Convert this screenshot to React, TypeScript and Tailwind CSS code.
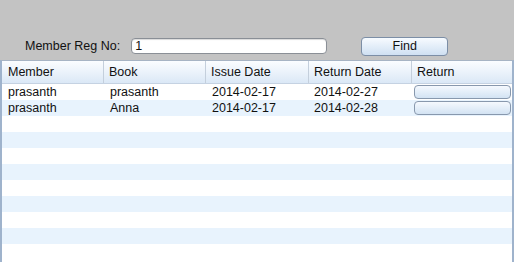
import React from "react";

const ROWS = [
  { member: "prasanth", book: "prasanth", issue: "2014-02-17", ret: "2014-02-27" },
  { member: "prasanth", book: "Anna", issue: "2014-02-17", ret: "2014-02-28" },
];

const HEADERS = ["Member", "Book", "Issue Date", "Return Date", "Return"];
const COLS = "grid grid-cols-[102px_102px_103px_103px_1fr]";

export default function App() {
  const empty = Array.from({ length: 9 });
  return (
    <div className="flex h-[262px] w-[514px] flex-col overflow-hidden bg-[#c3c3c3] font-['Liberation_Sans',Arial,sans-serif] text-[12.5px] text-[#111]">
      {/* search bar */}
      <div className="flex h-[60px] items-start pt-[37px]">
        <span className="ml-[25px] mt-[1px] leading-[16px]">Member Reg No:</span>
        <div className="ml-[11px] mt-[1px] flex h-[16px] w-[196px] items-center rounded-[4px] border border-[#8a8f96] bg-white pl-[3px] shadow-[inset_0_1px_1px_rgba(0,0,0,0.15)]">
          1
        </div>
        <button
          type="button"
          className="ml-[34px] flex h-[19px] w-[87px] items-center justify-center rounded-[4px] border border-[#7c8ea6] bg-gradient-to-b from-[#f7fbff] to-[#cfe0f2] leading-none"
        >
          Find
        </button>
      </div>

      {/* table */}
      <div className="flex flex-1 flex-col border-x-2 border-t border-x-[#9fb3cc] border-t-[#a7b4c4] bg-white">
        <div className={`${COLS} h-[23px] shrink-0 border-b border-[#c5d2e2] bg-gradient-to-b from-[#fbfdff] to-[#dbe8f6]`}>
          {HEADERS.map((h, i) => (
            <div
              key={h}
              className={`flex items-center ${i === 0 ? "pl-[6px]" : "pl-[5px]"} ${i < 4 ? "border-r border-[#c4cfdc]" : ""}`}
            >
              {h}
            </div>
          ))}
        </div>
        {ROWS.map((r, idx) => (
          <div
            key={idx}
            className={`${COLS} h-[16px] shrink-0 items-center ${idx % 2 ? "bg-[#e8f3fd]" : "bg-white"}`}
          >
            <span className="pl-[6px] leading-[16px]">{r.member}</span>
            <span className="pl-[6px] leading-[16px]">{r.book}</span>
            <span className="pl-[6px] leading-[16px]">{r.issue}</span>
            <span className="pl-[5px] leading-[16px]">{r.ret}</span>
            <div className="flex h-[16px] items-center pl-[2px] pr-[1px]">
              <button
                type="button"
                className="h-[14px] w-full rounded-[4px] border border-[#8898ad] bg-gradient-to-b from-[#f5f9fe] to-[#d3e3f3]"
              />
            </div>
          </div>
        ))}
        {empty.map((_, i) => (
          <div key={i} className={`h-[16px] shrink-0 ${i % 2 ? "bg-[#e8f3fd]" : "bg-white"}`} />
        ))}
      </div>
    </div>
  );
}
